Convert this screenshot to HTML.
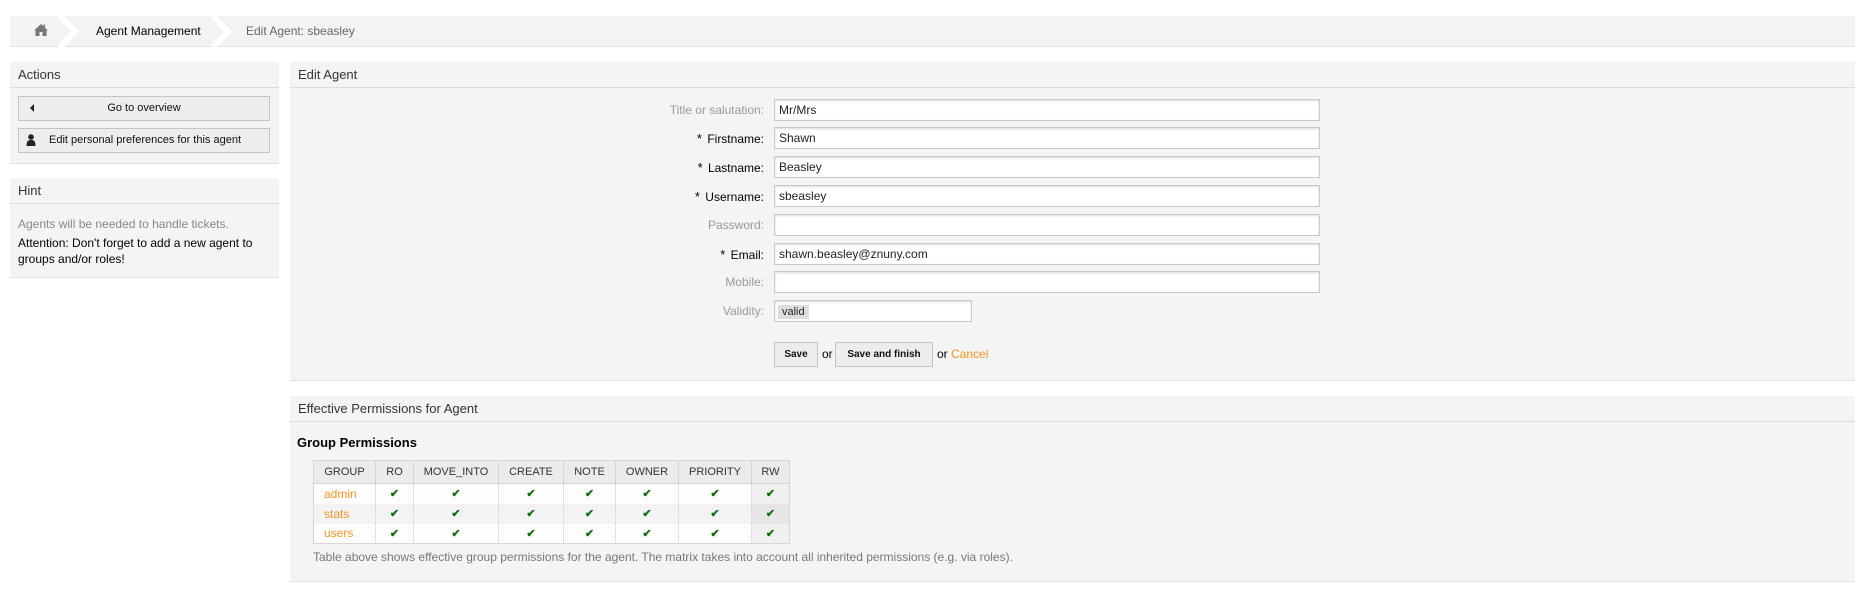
<!DOCTYPE html>
<html><head><meta charset="utf-8"><style>
*{box-sizing:border-box;margin:0;padding:0}
body{width:1855px;height:603px;background:#fff;font-family:"Liberation Sans",Arial,sans-serif;font-size:12px;color:#000;position:relative;overflow:hidden}
.abs{position:absolute}
.bc{left:10px;top:16px;width:1845px;height:31px;background:#f3f3f3;border-bottom:1px solid #e2e2e2}
.panel{position:absolute;background:#f4f4f4;border-bottom:1px solid #e0e0e0}
.ph{height:26px;border-bottom:1px solid #dcdcdc;padding:5px 8px 0;font-size:13px;color:#333}
.btn{position:absolute;background:#ededed;border:1px solid #c4c4c4;font-size:11px;color:#111;height:25px;line-height:23px}
.lbl{position:absolute;right:1091px;width:200px;text-align:right;font-size:12px;color:#000}
.lbl.g{color:#999}
.in{position:absolute;left:774px;width:546px;height:22px;background:#fff;border:1px solid #c9c9c9;box-shadow:inset 0 1px 2px #ddd;padding:3px 4px;font-size:12px;color:#222}
.star{font-size:13px;margin-right:2px}
table{border-collapse:collapse;position:absolute;left:313px;top:460px;width:477px;font-size:11px}
th{background:#ebebeb;border:1px solid #d6d6d6;height:23px;font-weight:normal;color:#333}
td{border-left:1px dotted #ccc;height:20px;text-align:center;background:#fdfdfd}
tr.alt td{background:#f3f3f3}
td:first-child{text-align:left;padding-left:10px;color:#f7931e;border-left:1px solid #d6d6d6;font-size:12px}
td:last-child{border-right:1px solid #d6d6d6;background:#f0f0f0}
tr.alt td:last-child{background:#e6e6e6}
tbody tr:last-child td{border-bottom:1px solid #d6d6d6}
.ck{color:#107010;font-size:11px;font-weight:bold}
</style></head><body>
<div class="abs bc"></div>
<svg class="abs" style="left:33px;top:23px" width="16" height="14" viewBox="0 0 16 14"><path d="M8 1 L1 7.5 L2.5 7.5 L2.5 13 L6.5 13 L6.5 9 L9.5 9 L9.5 13 L13.5 13 L13.5 7.5 L15 7.5 L12 4.7 L12 1.5 L10.5 1.5 L10.5 3.3 Z" fill="#777"/></svg>
<svg class="abs" style="left:58px;top:16px" width="24" height="31"><path d="M2 0 L17 15.5 L2 31" stroke="#fff" stroke-width="6" fill="none"/></svg>
<div class="abs" style="left:96px;top:24px;font-size:12px">Agent Management</div>
<svg class="abs" style="left:211px;top:16px" width="24" height="31"><path d="M2 0 L17 15.5 L2 31" stroke="#fff" stroke-width="6" fill="none"/></svg>
<div class="abs" style="left:246px;top:24px;font-size:12px;color:#666">Edit Agent: sbeasley</div>

<div class="panel" style="left:10px;top:62px;width:269px;height:102px"><div class="ph">Actions</div></div>
<div class="btn" style="left:18px;top:96px;width:252px;text-align:center">Go to overview</div>
<div class="abs" style="left:30px;top:104px;width:0;height:0;border-top:4px solid transparent;border-bottom:4px solid transparent;border-right:4px solid #222"></div>
<div class="btn" style="left:18px;top:128px;width:252px;padding-left:30px">Edit personal preferences for this agent</div>
<svg class="abs" style="left:26px;top:134px" width="10" height="12"><circle cx="5" cy="3" r="2.8" fill="#222"/><path d="M0.5 12 C0.5 7 2 6 5 6 C8 6 9.5 7 9.5 12 Z" fill="#222"/></svg>

<div class="panel" style="left:10px;top:178px;width:269px;height:100px"><div class="ph">Hint</div>
<div style="padding:11px 8px 0;font-size:12px;line-height:18px"><div style="color:#888;margin-bottom:2px">Agents will be needed to handle tickets.</div><div style="line-height:16px">Attention: Don't forget to add a new agent to groups and/or roles!</div></div></div>

<div class="panel" style="left:290px;top:62px;width:1565px;height:319px"><div class="ph">Edit Agent</div></div>
<div class="lbl g" style="top:103px">Title or salutation:</div><div class="in" style="top:99px">Mr/Mrs</div>
<div class="lbl" style="top:131px"><span class="star">*</span> Firstname:</div><div class="in" style="top:127px">Shawn</div>
<div class="lbl" style="top:160px"><span class="star">*</span> Lastname:</div><div class="in" style="top:156px">Beasley</div>
<div class="lbl" style="top:189px"><span class="star">*</span> Username:</div><div class="in" style="top:185px">sbeasley</div>
<div class="lbl g" style="top:218px">Password:</div><div class="in" style="top:214px"></div>
<div class="lbl" style="top:247px"><span class="star">*</span> Email:</div><div class="in" style="top:243px">shawn.beasley@znuny.com</div>
<div class="lbl g" style="top:275px">Mobile:</div><div class="in" style="top:271px"></div>
<div class="lbl g" style="top:304px">Validity:</div><div class="in" style="top:300px;width:198px;padding:3px"><span style="background:#ddd;padding:1px 4px;font-size:11px">valid</span></div>
<div class="btn" style="left:774px;top:342px;width:44px;text-align:center;font-weight:bold;font-size:10px">Save</div>
<div class="abs" style="left:822px;top:347px">or</div>
<div class="btn" style="left:835px;top:342px;width:98px;text-align:center;font-weight:bold;font-size:10px">Save and finish</div>
<div class="abs" style="left:937px;top:347px">or <span style="color:#f7931e">Cancel</span></div>

<div class="panel" style="left:290px;top:396px;width:1565px;height:186px"><div class="ph">Effective Permissions for Agent</div>
<div style="padding:13px 7px 0;font-size:13px;font-weight:bold">Group Permissions</div></div>
<table>
<thead><tr><th style="width:62px">GROUP</th><th style="width:38px">RO</th><th style="width:85px">MOVE_INTO</th><th style="width:65px">CREATE</th><th style="width:52px">NOTE</th><th style="width:63px">OWNER</th><th style="width:73px">PRIORITY</th><th>RW</th></tr></thead>
<tbody>
<tr><td>admin</td><td class="ck">✔</td><td class="ck">✔</td><td class="ck">✔</td><td class="ck">✔</td><td class="ck">✔</td><td class="ck">✔</td><td class="ck">✔</td></tr>
<tr class="alt"><td>stats</td><td class="ck">✔</td><td class="ck">✔</td><td class="ck">✔</td><td class="ck">✔</td><td class="ck">✔</td><td class="ck">✔</td><td class="ck">✔</td></tr>
<tr><td>users</td><td class="ck">✔</td><td class="ck">✔</td><td class="ck">✔</td><td class="ck">✔</td><td class="ck">✔</td><td class="ck">✔</td><td class="ck">✔</td></tr>
</tbody></table>
<div class="abs" style="left:313px;top:550px;font-size:12px;color:#777">Table above shows effective group permissions for the agent. The matrix takes into account all inherited permissions (e.g. via roles).</div>
</body></html>
